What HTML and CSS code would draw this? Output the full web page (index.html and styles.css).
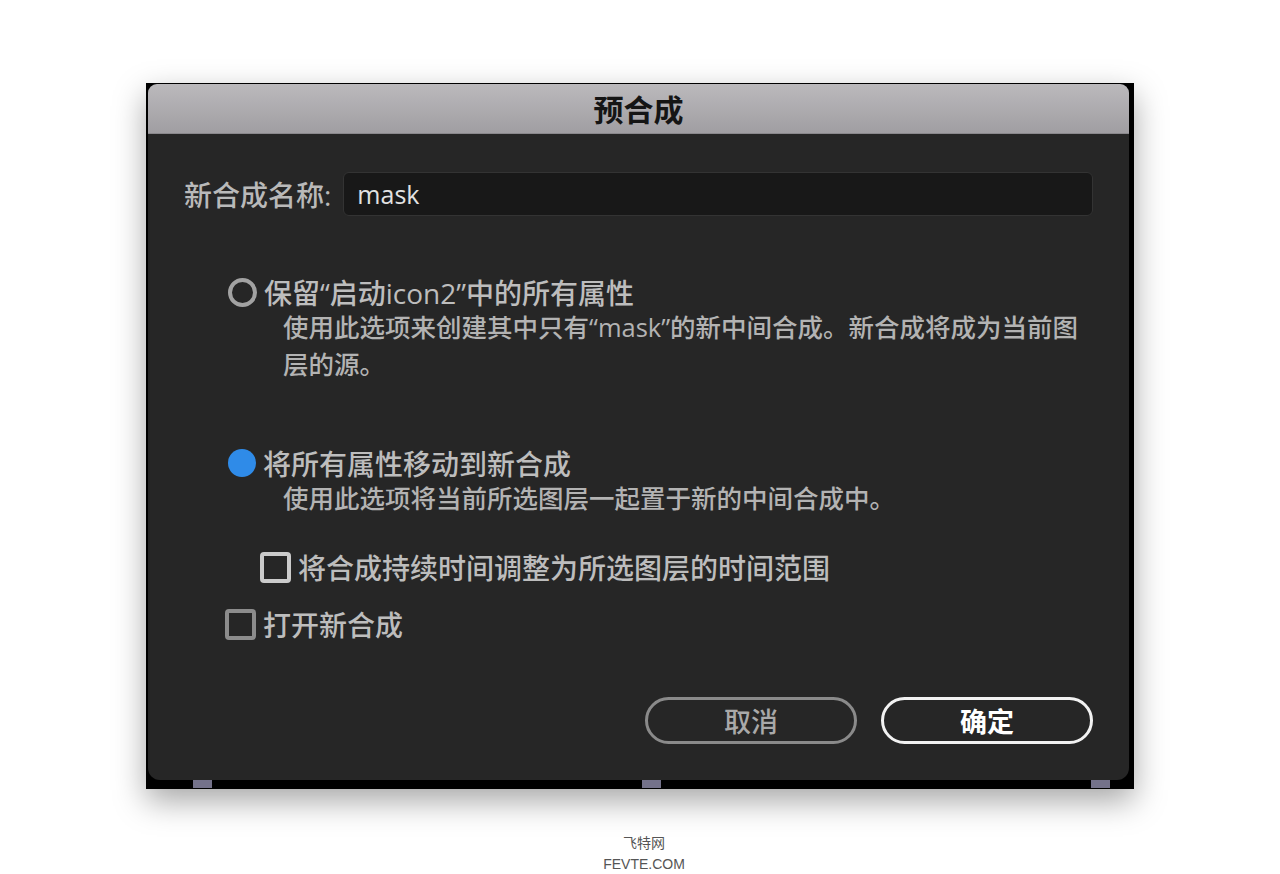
FILE: index.html
```html
<!DOCTYPE html>
<html lang="zh-CN">
<head>
    <meta charset="UTF-8">
    <meta name="viewport" content="width=device-width, initial-scale=1.0">
    <title>预合成</title>
    <link rel="stylesheet" href="styles.css">
</head>
<body>

    <!-- Dialog window -->
    <div class="frame">
        <div class="dialog">
            <div class="titlebar">预合成</div>

            <div class="content">
                <div class="name-row">
                    <label class="name-label" for="compName">新合成名称:</label>
                    <input class="name-input" id="compName" type="text" value="mask">
                </div>

                <div class="options">
                    <div class="option first">
                        <div class="row">
                            <span class="radio"></span>
                            <span class="label">保留“启动icon2”中的所有属性</span>
                        </div>
                        <div class="desc">使用此选项来创建其中只有“mask”的新中间合成。新合成将成为当前图层的源。</div>
                    </div>

                    <div class="option second">
                        <div class="row">
                            <span class="radio checked"></span>
                            <span class="label">将所有属性移动到新合成</span>
                        </div>
                        <div class="desc">使用此选项将当前所选图层一起置于新的中间合成中。</div>
                    </div>

                    <div class="row check-row indent">
                        <span class="checkbox focus"></span>
                        <span class="label">将合成持续时间调整为所选图层的时间范围</span>
                    </div>

                    <div class="row check-row open">
                        <span class="checkbox"></span>
                        <span class="label">打开新合成</span>
                    </div>
                </div>

                <div class="buttons">
                    <button class="button cancel">取消</button>
                    <button class="button ok">确定</button>
                </div>
            </div>
        </div>
        <div class="marks">
            <span class="mark"></span>
            <span class="mark"></span>
            <span class="mark"></span>
        </div>
    </div>

    <div class="watermark">
        <div>飞特网</div>
        <div>FEVTE.COM</div>
    </div>

</body>
</html>
```

FILE: styles.css
```css
body {
    margin: 0;
    background-color: white;
    font-family: "Open Sans", "Noto Sans CJK SC", sans-serif;
}
.frame {
    width: 988px;
    margin: 83px 0 0 146px;
    padding: 1px 5px 1px 2px;
    box-sizing: border-box;
    background-color: black;
    box-shadow: 0 12px 30px rgba(0, 0, 0, 0.35);
}
.dialog {
    height: 696px;
    background-color: #262626;
    border-radius: 9px 9px 12px 12px;
    overflow: hidden;
}
.titlebar {
    height: 50px;
    line-height: 48px;
    text-align: center;
    font-family: "Noto Sans CJK SC", sans-serif;
    font-size: 30px;
    font-weight: bold;
    color: #151515;
    background: linear-gradient(#bbb9bc, #a09ea2);
    border-bottom: 1px solid #8a888c;
    box-sizing: border-box;
}
.content {
    padding: 38px 36px 0 36px;
}
.name-row {
    display: flex;
    align-items: center;
    gap: 12px;
}
.name-label {
    font-size: 28px;
    font-weight: 500;
    color: #b9b9b9;
}
.name-input {
    flex: 1;
    height: 44px;
    box-sizing: border-box;
    background-color: #181818;
    border: 1px solid #333;
    border-radius: 6px;
    padding: 0 13px;
    font-family: "Open Sans", sans-serif;
    font-size: 25px;
    font-weight: 500;
    color: #e2e2e2;
    outline: none;
}
.options {
    padding-left: 41px;
}
.option.first {
    margin-top: 59px;
}
.option.second {
    margin-top: 63px;
}
.row {
    display: flex;
    align-items: center;
    height: 34px;
    gap: 7px;
}
.label {
    font-size: 28px;
    font-weight: 500;
    color: #bdbdbd;
    white-space: nowrap;
}
.desc {
    padding-left: 58px;
    width: 808px;
    font-size: 25.5px;
    font-weight: 500;
    line-height: 37px;
    color: #b3b3b3;
}
.radio {
    width: 29px;
    height: 29px;
    box-sizing: border-box;
    border: 4px solid #a2a2a2;
    border-radius: 50%;
    margin-left: 3px;
}
.radio.checked {
    border: none;
    background-color: #2f8be8;
    width: 28px;
    height: 28px;
}
.checkbox {
    width: 31px;
    height: 31px;
    box-sizing: border-box;
    border: 4px solid #8c8c8c;
    border-radius: 4px;
}
.checkbox.focus {
    border-color: #cbcbcb;
}
.check-row.indent {
    margin-top: 33px;
    padding-left: 35px;
}
.check-row.open {
    margin-top: 23px;
}
.buttons {
    display: flex;
    justify-content: flex-end;
    gap: 24px;
    margin-top: 56px;
}
.button {
    width: 212px;
    height: 47px;
    border-radius: 24px;
    background-color: transparent;
    font-family: "Noto Sans CJK SC", sans-serif;
    font-size: 27px;
    font-weight: 500;
    cursor: pointer;
}
.cancel {
    border: 3px solid #8a8a8a;
    color: #a9a9a9;
}
.ok {
    border: 3px solid #f2f2f2;
    color: white;
    font-weight: bold;
}
.marks {
    display: flex;
    justify-content: space-between;
    height: 8px;
    padding: 0 19px 0 45px;
}
.mark {
    width: 19px;
    height: 8px;
    background-color: #74728a;
}
.watermark {
    margin-top: 44px;
    padding-left: 8px;
    text-align: center;
    font-family: "Liberation Sans", "Noto Sans CJK SC", sans-serif;
    font-size: 14px;
    line-height: 21px;
    color: #555;
}
```
